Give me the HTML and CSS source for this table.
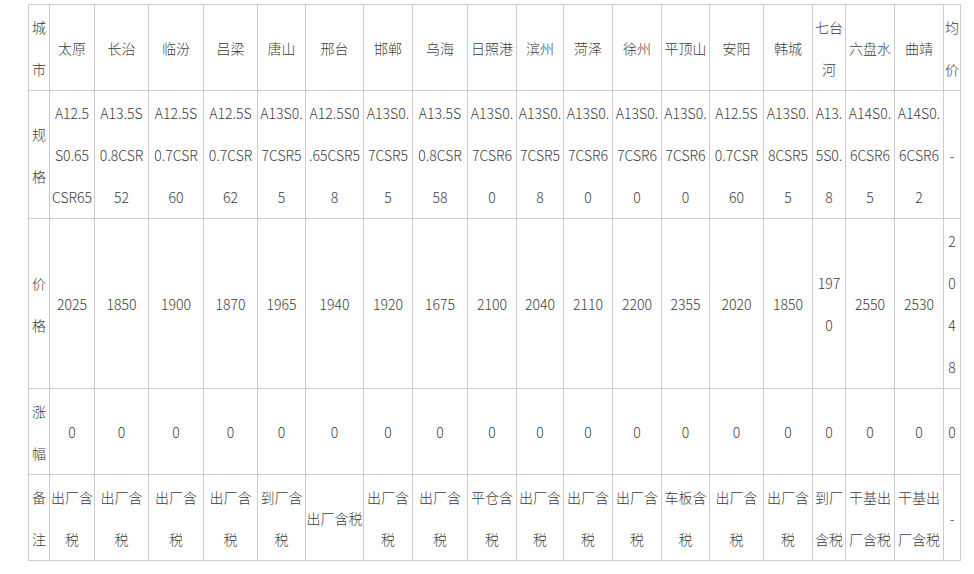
FILE: index.html
```html
<!DOCTYPE html>
<html lang="zh-CN">
<head>
<meta charset="utf-8">
<title>价格表</title>
<link rel="stylesheet" href="styles.css">
</head>
<body>
<div class="wrap">
<table class="price-table">
<colgroup>
<col class="w21"><col class="w45"><col class="w54"><col class="w55"><col class="w54"><col class="w48"><col class="w58"><col class="w49"><col class="w55"><col class="w49"><col class="w47"><col class="w49"><col class="w49"><col class="w48"><col class="w54"><col class="w49"><col class="w33"><col class="w49"><col class="w49"><col class="w17">
</colgroup>
<tbody>
<tr class="r2">
<td class="lab">城<br>市</td><td>太原</td><td>长治</td><td>临汾</td><td>吕梁</td><td>唐山</td><td>邢台</td><td>邯郸</td><td>乌海</td><td>日照港</td><td>滨州</td><td>菏泽</td><td>徐州</td><td>平顶山</td><td>安阳</td><td>韩城</td><td>七台<br>河</td><td>六盘水</td><td>曲靖</td><td class="lab">均<br>价</td>
</tr>
<tr class="r3">
<td class="lab">规<br>格</td>
<td>A12.5<br>S0.65<br>CSR65</td>
<td>A13.5S<br>0.8CSR<br>52</td>
<td>A12.5S<br>0.7CSR<br>60</td>
<td>A12.5S<br>0.7CSR<br>62</td>
<td>A13S0.<br>7CSR5<br>5</td>
<td>A12.5S0<br>.65CSR5<br>8</td>
<td>A13S0.<br>7CSR5<br>5</td>
<td>A13.5S<br>0.8CSR<br>58</td>
<td>A13S0.<br>7CSR6<br>0</td>
<td>A13S0.<br>7CSR5<br>8</td>
<td>A13S0.<br>7CSR6<br>0</td>
<td>A13S0.<br>7CSR6<br>0</td>
<td>A13S0.<br>7CSR6<br>0</td>
<td>A12.5S<br>0.7CSR<br>60</td>
<td>A13S0.<br>8CSR5<br>5</td>
<td>A13.<br>5S0.<br>8</td>
<td>A14S0.<br>6CSR6<br>5</td>
<td>A14S0.<br>6CSR6<br>2</td>
<td class="lab">-</td>
</tr>
<tr class="r4">
<td class="lab">价<br>格</td>
<td>2025</td><td>1850</td><td>1900</td><td>1870</td><td>1965</td><td>1940</td><td>1920</td><td>1675</td><td>2100</td><td>2040</td><td>2110</td><td>2200</td><td>2355</td><td>2020</td><td>1850</td><td>197<br>0</td><td>2550</td><td>2530</td><td class="lab">2<br>0<br>4<br>8</td>
</tr>
<tr class="r2">
<td class="lab">涨<br>幅</td>
<td>0</td><td>0</td><td>0</td><td>0</td><td>0</td><td>0</td><td>0</td><td>0</td><td>0</td><td>0</td><td>0</td><td>0</td><td>0</td><td>0</td><td>0</td><td>0</td><td>0</td><td>0</td><td class="lab">0</td>
</tr>
<tr class="r2">
<td class="lab">备<br>注</td>
<td>出厂含<br>税</td><td>出厂含<br>税</td><td>出厂含<br>税</td><td>出厂含<br>税</td><td>到厂含<br>税</td><td>出厂含税</td><td>出厂含<br>税</td><td>出厂含<br>税</td><td>平仓含<br>税</td><td>出厂含<br>税</td><td>出厂含<br>税</td><td>出厂含<br>税</td><td>车板含<br>税</td><td>出厂含<br>税</td><td>出厂含<br>税</td><td>到厂<br>含税</td><td>干基出<br>厂含税</td><td>干基出<br>厂含税</td><td class="lab">-</td>
</tr>
</tbody>
</table>
</div>
</body>
</html>
```
FILE: styles.css
```css
html, body {
  margin: 0;
  padding: 0;
  background: #fff;
}
.wrap {
  padding: 4px 0 0 28px;
}
.price-table {
  border-collapse: collapse;
  table-layout: fixed;
  width: 932px;
  font-family: "Noto Sans CJK SC", "Noto Sans", sans-serif;
  font-size: 14px;
  font-weight: 300;
  color: #3c3c3c;
}
.price-table td {
  border: 1px solid #ccc;
  line-height: 42px;
  padding: 1px 0 0 0;
  text-align: center;
  vertical-align: middle;
  white-space: nowrap;
  overflow: hidden;
}
.price-table td.lab {
  text-align: center;
}
.w21 { width: 21px; }
.w45 { width: 45px; }
.w54 { width: 54px; }
.w55 { width: 55px; }
.w48 { width: 48px; }
.w58 { width: 58px; }
.w49 { width: 49px; }
.w47 { width: 47px; }
.w33 { width: 33px; }
.w17 { width: 17px; }
```
